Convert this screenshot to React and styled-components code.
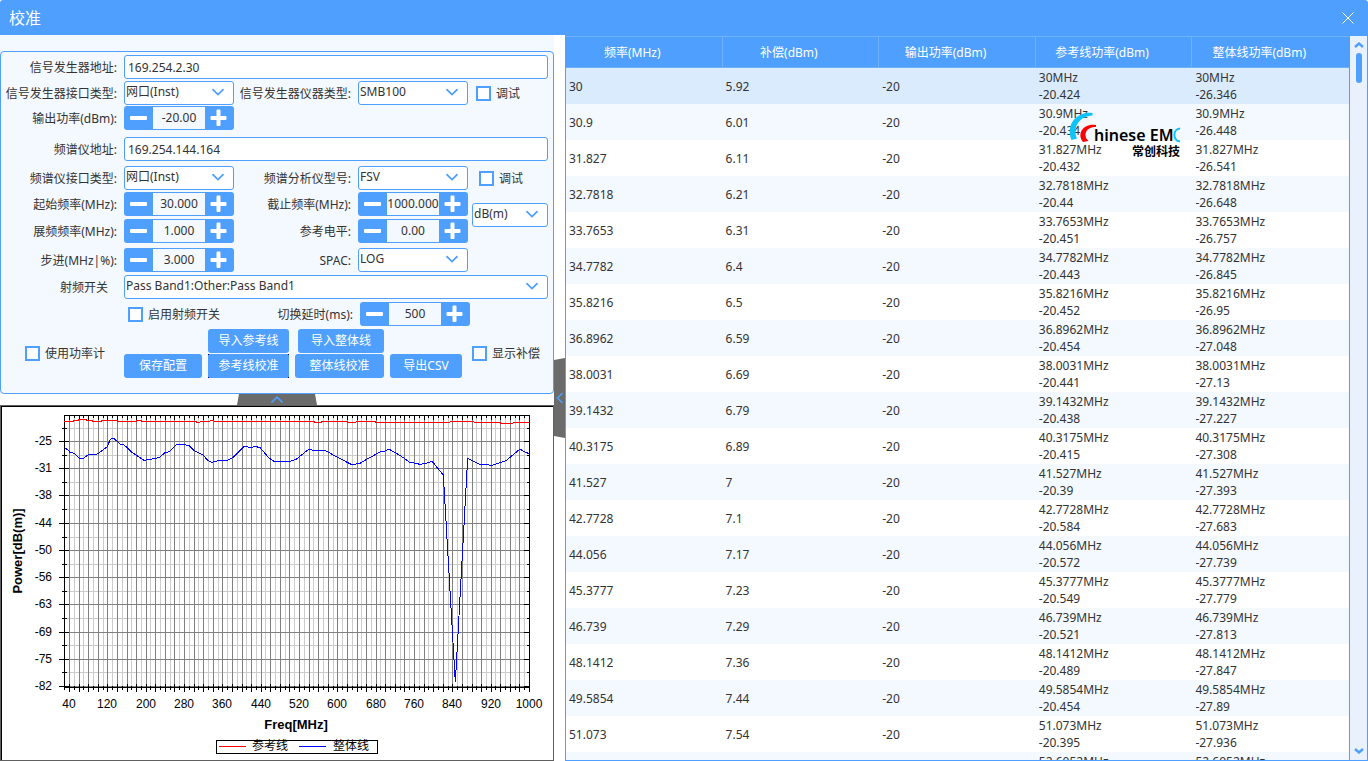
import React, { useState } from "react";
import styled, { createGlobalStyle } from "styled-components";

const blue = "#4f9fff";
const pale = "#f4f9ff";
const ink = "#333333";
const uiFont = '"Noto Sans", "Noto Sans CJK SC", sans-serif';
const chartFont = '"Liberation Sans", "Noto Sans CJK SC", sans-serif';

const GlobalStyle = createGlobalStyle`
  *, *::before, *::after { box-sizing: border-box; }
  body {
    margin: 0;
    background: #ffffff;
    color: ${ink};
    font-family: ${uiFont};
    font-size: 12px;
    line-height: 17px;
  }
  button, input, select { font: inherit; color: inherit; margin: 0; }
`;

const Window = styled.div`
  display: flex;
  flex-direction: column;
  height: 100vh;
  overflow: hidden;
`;

const TitleBar = styled.header`
  display: flex;
  flex: none;
  align-items: center;
  justify-content: space-between;
  height: 35px;
  padding: 0 12px 0 9px;
  background: ${blue};
  border-radius: 3px 3px 0 0;
  color: #ffffff;
`;

const Title = styled.h1`
  margin: 0;
  font-size: 16px;
  font-weight: 400;
  line-height: 24px;
`;

const CloseButton = styled.button`
  display: flex;
  padding: 2px;
  border: 0;
  background: none;
  color: #ffffff;
`;

const Workspace = styled.main`
  display: grid;
  flex: 1;
  min-height: 0;
  grid-template-columns: minmax(0, 554fr) 11px minmax(0, 803fr);
  grid-template-rows: minmax(0, 1fr);
`;

const LeftColumn = styled.section`
  display: flex;
  flex-direction: column;
  min-height: 0;
`;

const FormArea = styled.div`
  flex: none;
  padding-top: 16px;
  background: ${pale};
`;

const Settings = styled.form`
  padding: 3px 5px 15px 0;
  border: 1px solid ${blue};
  border-radius: 4px;
  background: ${pale};
`;

const Row = styled.div`
  display: grid;
  align-items: center;
  min-height: 24px;
  margin-top: ${(p) => p.$gap || 0}px;
  grid-template-columns: ${(p) =>
    ({
      full: "123px minmax(0, 1fr)",
      fields: "123px 110fr 124px 110fr 80fr",
      delay: "123px 112fr 124px 110fr 78fr",
      pair: "123px 110fr 124px 110fr",
      actions: "123px auto 1fr",
    })[p.$layout || "fields"]};
`;

const UnitBlock = styled.div`
  display: grid;
  grid-template-columns: 467fr 76fr;
  column-gap: 4px;
  margin-top: 2px;
`;

const UnitCell = styled.div`
  padding-top: 11px;
`;

const Label = styled.label`
  padding-right: ${(p) => (p.$plain ? 16 : 7)}px;
  text-align: right;
  white-space: nowrap;
`;

const TextInput = styled.input`
  width: 100%;
  height: 24px;
  padding: 1px 3px 0;
  border: 1px solid ${blue};
  border-radius: 3px;
  background: #ffffff;
  outline: none;
`;

const SelectFrame = styled.div`
  display: grid;
  align-items: center;
  height: 24px;
  & > * { grid-area: 1 / 1; }
  & > svg {
    justify-self: end;
    margin: 0 10px 2px 0;
    pointer-events: none;
  }
`;

const SelectBox = styled.select`
  appearance: none;
  width: 100%;
  height: 24px;
  padding: 0 24px 3px 1px;
  border: 1px solid ${blue};
  border-radius: 3px;
  background: #ffffff;
  outline: none;
`;

const Spinner = styled.div`
  display: grid;
  grid-template-columns: 29px minmax(0, 1fr) 29px;
  height: 24px;
  overflow: hidden;
  border-radius: 3px;
`;

const StepButton = styled.button`
  display: flex;
  align-items: center;
  justify-content: center;
  padding: 0 1px 0 0;
  border: 0;
  background: ${blue};
`;

const SpinnerValue = styled.input`
  width: 100%;
  padding: 0 0 2px;
  border: solid ${blue};
  border-width: 1px 0;
  background: ${pale};
  text-align: center;
  outline: none;
`;

const CheckLabel = styled.label`
  display: flex;
  align-items: center;
  gap: 5px;
  padding-left: ${(p) => p.$indent}px;
  white-space: nowrap;
`;

const CheckBox = styled.input`
  appearance: none;
  flex: none;
  width: 15px;
  height: 15px;
  border: 2px solid ${blue};
  background: #ffffff;
  &:checked { background: ${blue}; }
`;

const ButtonGrid = styled.div`
  display: grid;
  grid-template-columns: 78px 81px 89px 72px;
  column-gap: 6px;
  row-gap: 1px;
`;

const ActionButton = styled.button`
  height: 24px;
  padding: 0 0 1px;
  border: 0;
  border-radius: 3px;
  background: ${blue};
  color: #ffffff;
  white-space: nowrap;
`;

const ImportButton = styled(ActionButton)`
  grid-column: ${(p) => p.$column};
  margin-left: ${(p) => p.$inset || 0}px;
`;

const SaveButton = styled(ActionButton)`
  grid-column: 1;
`;

const DefaultButton = styled(ActionButton)`
  border-radius: 0;
  background:
    linear-gradient(${blue}, ${blue}) center / calc(100% - 2px) 100% no-repeat,
    linear-gradient(${blue}, ${blue}) center / 100% calc(100% - 2px) no-repeat,
    #000080;
`;

const FoldStrip = styled.div`
  display: flex;
  flex: none;
  align-items: flex-end;
  justify-content: center;
  height: 11px;
  background: #ffffff;
`;

const Handle = styled.button`
  display: flex;
  align-items: center;
  justify-content: center;
  padding: 0;
  border: 0;
  background: #6b6b6b;
  width: ${(p) => (p.$side ? 11 : 80)}px;
  height: ${(p) => (p.$side ? 80 : 11)}px;
  clip-path: ${(p) =>
    p.$side
      ? "polygon(0 2px, 100% 0, 100% 100%, 0 78px)"
      : "polygon(2px 0, 78px 0, 100% 100%, 0 100%)"};
`;

const Splitter = styled.div`
  display: flex;
  align-items: center;
  background: #ffffff;
`;

const ChartPanel = styled.figure`
  flex: 1;
  min-height: 0;
  margin: 0;
  border: 1px solid #606060;
  box-shadow: inset 1px 1px 0 #000000;
  & > svg { display: block; width: 100%; height: 100%; }
`;

const TablePanel = styled.section`
  display: grid;
  grid-template-columns: minmax(0, 1fr) 17px;
  min-height: 0;
  border: 1px solid ${blue};
`;

const TableView = styled.div`
  position: relative;
  overflow: hidden;
  border-right: 1px solid ${blue};
`;

const DataTable = styled.table`
  width: 100%;
  table-layout: fixed;
  border-collapse: separate;
  border-spacing: 0;
`;

const HeadCell = styled.th`
  height: 32px;
  padding: 0 23px 0 0;
  border: solid #6fb1ff;
  border-width: 1px 1px 1px 0;
  background: ${blue};
  color: #ffffff;
  font-weight: 400;
  text-align: center;
  &:last-child { border-right: 0; }
`;

const BodyRow = styled.tr`
  height: 36px;
  background: ${(p) => (p.$selected ? "#dbebfe" : p.$odd ? pale : "#ffffff")};
`;

const Cell = styled.td`
  height: 36px;
  padding: 0 3px;
  white-space: pre-line;
`;

const Watermark = styled.svg`
  position: absolute;
  top: 76px;
  right: 164px;
  pointer-events: none;
`;

const ScrollTrack = styled.div`
  display: flex;
  flex-direction: column;
  align-items: center;
  padding: 6px 0;
  background: #e9f1fd;
`;

const ScrollButton = styled.button`
  display: flex;
  padding: 0;
  border: 0;
  background: none;
`;

const ScrollLane = styled.div`
  flex: 1;
  padding-top: 5px;
`;

const ScrollThumb = styled.div`
  width: 6px;
  height: 30px;
  border-radius: 3px;
  background: ${blue};
`;

function Chevron({ dir = "down" }) {
  return (
    <svg width="12" height="8" viewBox="0 0 12 8" aria-hidden="true">
      <path
        d={dir === "up" ? "M0.5 6.5L6 1.200L11.500 6.500" : "M0.500 1.200L6 6.500L11.500 1.200"}
        fill="none"
        stroke={blue}
        strokeWidth="1.7"
      />
    </svg>
  );
}

function ScrollArrow({ dir }) {
  return (
    <svg width="10" height="6" viewBox="0 0 10 6" aria-hidden="true">
      <path
        d={dir === "up" ? "M1 5L5 1.500L9 5" : "M1 1L5 4.500L9 1"}
        fill="none"
        stroke={blue}
        strokeWidth="2.4"
      />
    </svg>
  );
}

function SelectField({ id, options, label }) {
  return (
    <SelectFrame>
      <SelectBox id={id} aria-label={label}>
        {options.map((o) => (
          <option key={o}>{o}</option>
        ))}
      </SelectBox>
      <Chevron />
    </SelectFrame>
  );
}

function NumberField({ id, initial, step = 1 }) {
  const [value, setValue] = useState(initial);
  const decimals = (initial.split(".")[1] || "").length;
  const change = (d) => setValue((Number(value) + d).toFixed(decimals));
  return (
    <Spinner>
      <StepButton type="button" aria-label="减" onClick={() => change(-step)}>
        <svg width="18" height="18" viewBox="0 0 18 18">
          <rect x="1" y="7" width="17" height="4" rx="1" fill="#fff" />
        </svg>
      </StepButton>
      <SpinnerValue id={id} value={value} onChange={(e) => setValue(e.target.value)} />
      <StepButton type="button" aria-label="加" onClick={() => change(step)}>
        <svg width="18" height="18" viewBox="0 0 18 18">
          <path d="M1.5 7h5V1.5q0-1 1-1h2q1 0 1 1V7h5q1 0 1 1v2q0 1-1 1h-5v5q0 1-1 1h-2q-1 0-1-1v-5h-5q-1 0-1-1V8q0-1 1-1z" fill="#fff" />
        </svg>
      </StepButton>
    </Spinner>
  );
}

function Check({ indent, children }) {
  return (
    <CheckLabel $indent={indent}>
      <CheckBox type="checkbox" />
      {children}
    </CheckLabel>
  );
}

function SettingsForm() {
  return (
    <Settings onSubmit={(e) => e.preventDefault()}>
      <Row $layout="full">
        <Label htmlFor="genAddr">信号发生器地址:</Label>
        <TextInput id="genAddr" defaultValue="169.254.2.30" />
      </Row>
      <Row $gap={2}>
        <Label htmlFor="genPort">信号发生器接口类型:</Label>
        <SelectField id="genPort" options={["网口(Inst)"]} />
        <Label htmlFor="genModel">信号发生器仪器类型:</Label>
        <SelectField id="genModel" options={["SMB100"]} />
        <Check indent={8}>调试</Check>
      </Row>
      <Row $gap={1}>
        <Label htmlFor="power">输出功率(dBm):</Label>
        <NumberField id="power" initial="-20.00" />
      </Row>
      <Row $layout="full" $gap={7}>
        <Label htmlFor="saAddr">频谱仪地址:</Label>
        <TextInput id="saAddr" defaultValue="169.254.144.164" />
      </Row>
      <Row $gap={5}>
        <Label htmlFor="saPort">频谱仪接口类型:</Label>
        <SelectField id="saPort" options={["网口(Inst)"]} />
        <Label htmlFor="saModel">频谱分析仪型号:</Label>
        <SelectField id="saModel" options={["FSV"]} />
        <Check indent={11}>调试</Check>
      </Row>
      <UnitBlock>
        <div>
          <Row $layout="pair">
            <Label htmlFor="fStart">起始频率(MHz):</Label>
            <NumberField id="fStart" initial="30.000" />
            <Label htmlFor="fStop">截止频率(MHz):</Label>
            <NumberField id="fStop" initial="1000.000" />
          </Row>
          <Row $layout="pair" $gap={3}>
            <Label htmlFor="span">展频频率(MHz):</Label>
            <NumberField id="span" initial="1.000" />
            <Label htmlFor="ref">参考电平:</Label>
            <NumberField id="ref" initial="0.00" />
          </Row>
        </div>
        <UnitCell>
          <SelectField label="单位" options={["dB(m)"]} />
        </UnitCell>
      </UnitBlock>
      <Row $gap={5}>
        <Label htmlFor="step">步进(MHz|%):</Label>
        <NumberField id="step" initial="3.000" />
        <Label htmlFor="spac">SPAC:</Label>
        <SelectField id="spac" options={["LOG"]} />
      </Row>
      <Row $layout="full" $gap={3}>
        <Label htmlFor="rf" $plain>射频开关</Label>
        <SelectField id="rf" options={["Pass Band1:Other:Pass Band1"]} />
      </Row>
      <Row $layout="delay" $gap={3}>
        <span />
        <Check indent={4}>启用射频开关</Check>
        <Label htmlFor="delay">切换延时(ms):</Label>
        <NumberField id="delay" initial="500" />
      </Row>
      <Row $layout="actions" $gap={3}>
        <Check indent={24}>使用功率计</Check>
        <ButtonGrid>
          <ImportButton type="button" $column={2}>导入参考线</ImportButton>
          <ImportButton type="button" $column={3} $inset={3}>导入整体线</ImportButton>
          <SaveButton type="button">保存配置</SaveButton>
          <DefaultButton type="button">参考线校准</DefaultButton>
          <ActionButton type="button">整体线校准</ActionButton>
          <ActionButton type="button">导出CSV</ActionButton>
        </ButtonGrid>
        <Check indent={10}>显示补偿</Check>
      </Row>
    </Settings>
  );
}

const plot = { left: 63, right: 528, top: 9, bottom: 281 };
const levels = [-25, -31, -38, -44, -50, -56, -63, -69, -75, -82];
const freqX = (f) => Math.round(68 + (f - 40) * 0.4792);
const majorY = levels.map((_, i) => Math.round(35 + i * 27.22));
const minorY = levels.map((_, i) => Math.round(22 + i * 27.15));
const majorF = Array.from({ length: 49 }, (_, i) => 40 + i * 20);
const minorF = Array.from({ length: 49 }, (_, i) => 30 + i * 20);

// Trace samples, three units to a pixel.
const refTrace =
  "193,79 220,79 222,76 235,76 238,73 258,73 260,76 277,76 279,79 304,79 307,76 350,76 354,79 408,79 411,76 422,76 425,79 588,79 590,82 600,82 602,79 628,79 632,76 640,76 643,79 942,79 943,82 965,82 966,79 1042,79 1044,82 1067,82 1069,79 1126,79 1128,82 1349,82 1351,79 1421,79 1423,82 1500,82 1502,85 1538,85 1540,82 1588,82";
const wholeTrace =
  "195,159 205,166 210,172 222,175 238,190 250,190 265,179 288,178 298,173 307,166 322,155 330,135 336,130 342,130 348,136 362,148 368,148 380,156 395,172 410,181 432,196 450,193 472,189 480,186 495,173 508,170 530,149 550,148 567,152 582,166 610,180 622,195 636,202 652,198 682,196 697,189 730,156 738,154 748,157 756,157 765,154 780,158 800,181 808,190 822,199 870,199 888,193 925,164 935,164 938,166 975,166 1000,180 1053,208 1062,208 1082,204 1100,193 1142,170 1155,168 1167,162 1178,169 1200,181 1228,201 1260,208 1280,204 1295,199 1302,206 1330,240 1366,862 1403,190 1438,207 1475,211 1518,197 1560,162 1572,170 1588,176";

const vLine = (x, y1, y2) => `M${x + 0.5} ${y1}V${y2}`;
const hLine = (y, x1, x2) => `M${x1} ${y + 0.5}H${x2}`;

function Chart() {
  const { left, right, top, bottom } = plot;
  const light = [
    ...minorF.map((f) => vLine(freqX(f), top, bottom)),
    ...minorY.map((y) => hLine(y, left, right)),
  ].join("");
  const dark = [
    ...majorF.map((f) => vLine(freqX(f), top, bottom)),
    ...majorY.map((y) => hLine(y, left, right)),
  ].join("");
  const ticks = [
    ...majorF.map((f) => vLine(freqX(f), bottom - 3, bottom + 5) + vLine(freqX(f), top, top + 5)),
    ...minorF.map((f) => vLine(freqX(f), bottom - 1, bottom + 3) + vLine(freqX(f), top, top + 3)),
    ...majorY.map((y) => hLine(y, left - 5, left + 5) + hLine(y, right - 5, right)),
    ...minorY.map((y) => hLine(y, left - 2, left + 3) + hLine(y, right - 2, right)),
  ].join("");
  return (
    <svg viewBox="0 0 552 354" fontFamily={chartFont} fontSize="12" role="img" aria-label="Power / Freq">
      <g fill="none" shapeRendering="crispEdges">
        <path d={light} stroke="#cccccc" />
        <path d={dark} stroke="#808080" />
        <path d={ticks} stroke="#000" />
        <rect x={left + 0.5} y={top + 0.5} width={right - left} height={bottom - top} stroke="#000" />
        <g transform="translate(-1 -11) scale(0.33333)">
          <polyline points={refTrace} stroke="#f00" vectorEffect="non-scaling-stroke" />
          <polyline points={wholeTrace} stroke="#00f" vectorEffect="non-scaling-stroke" />
        </g>
      </g>
      {levels.map((v, i) => (
        <text key={v} x="51" y={majorY[i] + 4} textAnchor="end">{v}</text>
      ))}
      {majorF.filter((f) => f % 80 === 40).map((f) => (
        <text key={f} x={freqX(f)} y="302" textAnchor="middle">{f}</text>
      ))}
      <text x="295" y="323" textAnchor="middle" fontSize="13" fontWeight="700">Freq[MHz]</text>
      <text transform="translate(21 145) rotate(-90)" textAnchor="middle" fontSize="13" fontWeight="700">Power[dB(m)]</text>
      <g shapeRendering="crispEdges">
        <rect x="215.5" y="334.5" width="161" height="13" fill="#fff" stroke="#000" />
        <path d="M218 340.5H245" stroke="#f00" />
        <path d="M298 340.5H325" stroke="#00f" />
      </g>
      <text x="251" y="344">参考线</text>
      <text x="332" y="344">整体线</text>
    </svg>
  );
}

const columns = ["频率(MHz)", "补偿(dBm)", "输出功率(dBm)", "参考线功率(dBm)", "整体线功率(dBm)"];
const measurements = [
  ["30", "5.92", "-20.424", "-26.346"],
  ["30.9", "6.01", "-20.434", "-26.448"],
  ["31.827", "6.11", "-20.432", "-26.541"],
  ["32.7818", "6.21", "-20.44", "-26.648"],
  ["33.7653", "6.31", "-20.451", "-26.757"],
  ["34.7782", "6.4", "-20.443", "-26.845"],
  ["35.8216", "6.5", "-20.452", "-26.95"],
  ["36.8962", "6.59", "-20.454", "-27.048"],
  ["38.0031", "6.69", "-20.441", "-27.13"],
  ["39.1432", "6.79", "-20.438", "-27.227"],
  ["40.3175", "6.89", "-20.415", "-27.308"],
  ["41.527", "7", "-20.39", "-27.393"],
  ["42.7728", "7.1", "-20.584", "-27.683"],
  ["44.056", "7.17", "-20.572", "-27.739"],
  ["45.3777", "7.23", "-20.549", "-27.779"],
  ["46.739", "7.29", "-20.521", "-27.813"],
  ["48.1412", "7.36", "-20.489", "-27.847"],
  ["49.5854", "7.44", "-20.454", "-27.89"],
  ["51.073", "7.54", "-20.395", "-27.936"],
  ["52.6052", "7.63", "-20.35", "-27.98"],
];

function Results() {
  return (
    <TablePanel>
      <TableView>
        <DataTable>
          <thead>
            <tr>
              {columns.map((c) => (
                <HeadCell key={c} scope="col">{c}</HeadCell>
              ))}
            </tr>
          </thead>
          <tbody>
            {measurements.map(([freq, comp, ref, whole], i) => (
              <BodyRow key={freq} $selected={i === 0} $odd={i % 2 === 1}>
                <Cell>{freq}</Cell>
                <Cell>{comp}</Cell>
                <Cell>-20</Cell>
                <Cell>{`${freq}MHz\n${ref}`}</Cell>
                <Cell>{`${freq}MHz\n${whole}`}</Cell>
              </BodyRow>
            ))}
          </tbody>
        </DataTable>
        <Watermark width="116" height="50" viewBox="0 0 116 50">
          <path d="M23.500 1 C8 -1 -4 13 2.500 28 L8 26.500 C3 16 10 4 23.500 3.500 Z" fill="#0cc4f8" />
          <path d="M27 13 C14 11 7.500 22 14 30 L19.500 29 C13.500 23 17 15 27 15 Z" fill="#ff0000" />
          <path d="M111 16.500 C103.500 17 103.500 28 111 29.500" fill="none" stroke="#0cc4f8" strokeWidth="2" />
          <text x="25" y="29" fontSize="16" fontWeight="600" fontFamily={uiFont}>hinese EM</text>
          <text x="63" y="44" fontSize="12" fontWeight="700" fontFamily={uiFont}>常创科技</text>
        </Watermark>
      </TableView>
      <ScrollTrack>
        <ScrollButton type="button" aria-label="向上滚动">
          <ScrollArrow dir="up" />
        </ScrollButton>
        <ScrollLane>
          <ScrollThumb />
        </ScrollLane>
        <ScrollButton type="button" aria-label="向下滚动">
          <ScrollArrow dir="down" />
        </ScrollButton>
      </ScrollTrack>
    </TablePanel>
  );
}

export default function App() {
  return (
    <Window>
      <GlobalStyle />
      <TitleBar>
        <Title>校准</Title>
        <CloseButton type="button" aria-label="关闭">
          <svg width="12" height="12" viewBox="0 0 12 12">
            <path d="M0.500 0.500L11.500 11.500M11.500 0.500L0.500 11.500" stroke="#fff" />
          </svg>
        </CloseButton>
      </TitleBar>
      <Workspace>
        <LeftColumn>
          <FormArea>
            <SettingsForm />
          </FormArea>
          <FoldStrip>
            <Handle type="button" aria-label="折叠设置">
              <Chevron dir="up" />
            </Handle>
          </FoldStrip>
          <ChartPanel>
            <Chart />
          </ChartPanel>
        </LeftColumn>
        <Splitter>
          <Handle type="button" $side aria-label="折叠面板">
            <svg width="8" height="12" viewBox="0 0 8 12">
              <path d="M6.500 1L1.500 6L6.500 11" fill="none" stroke={blue} strokeWidth="1.500" />
            </svg>
          </Handle>
        </Splitter>
        <Results />
      </Workspace>
    </Window>
  );
}
